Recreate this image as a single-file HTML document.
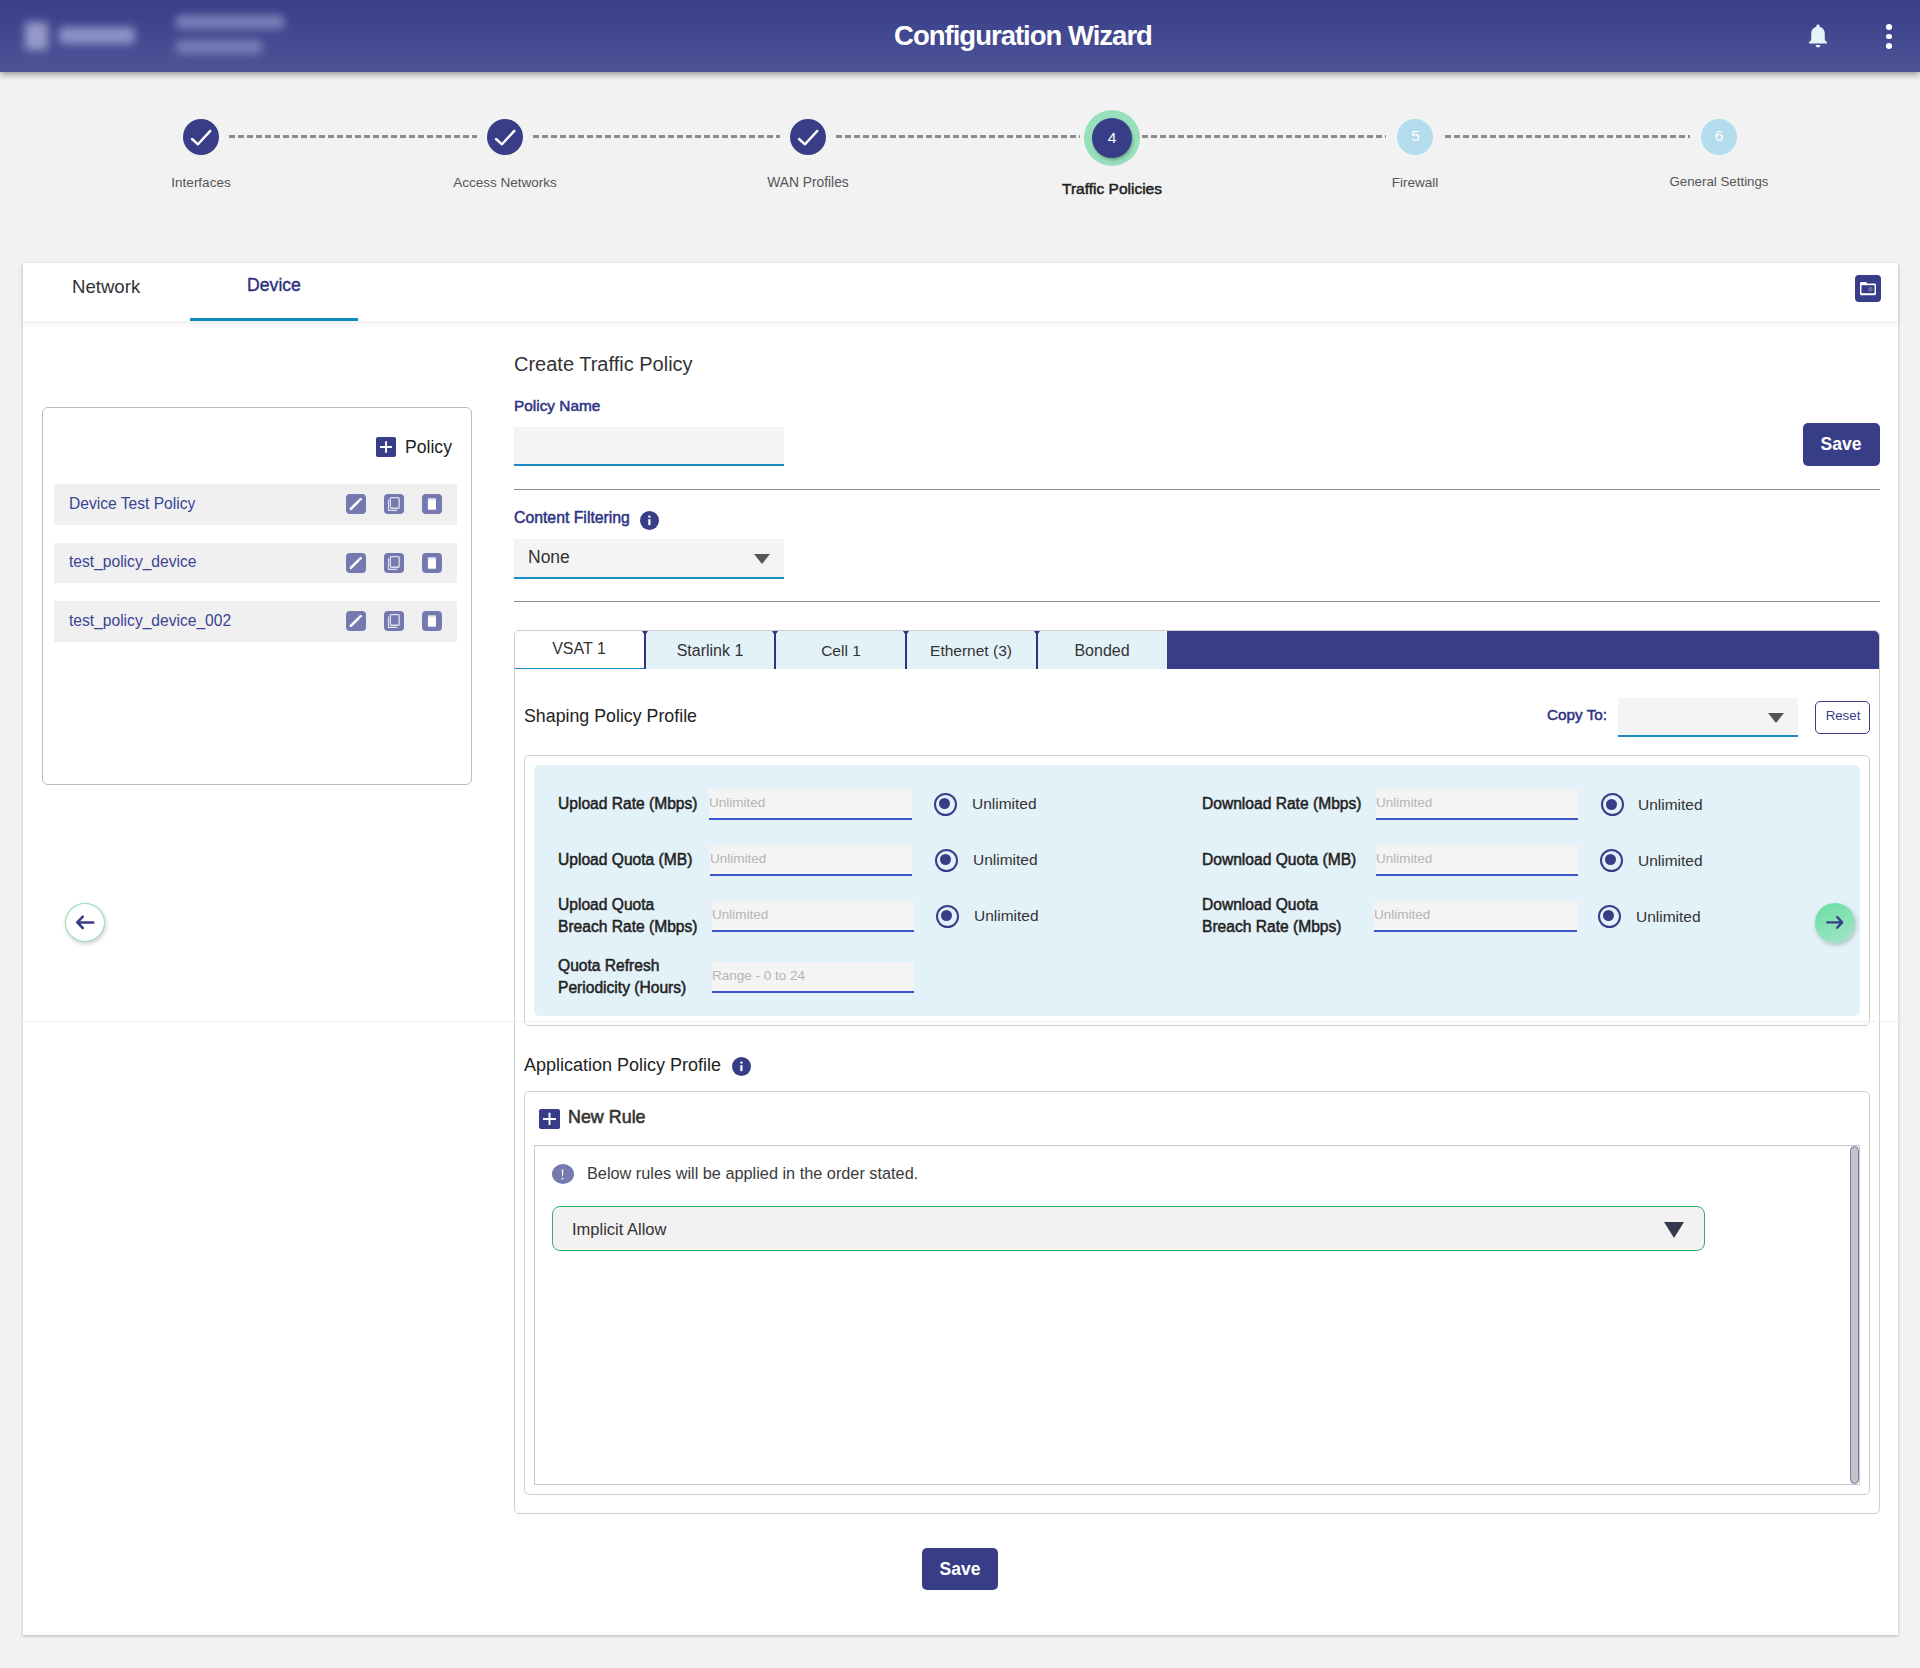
<!DOCTYPE html>
<html><head><meta charset="utf-8">
<style>
*{box-sizing:border-box;margin:0;padding:0}
html,body{width:1920px;height:1668px;overflow:hidden}
body{background:#f2f2f2;font-family:"Liberation Sans",sans-serif;position:relative;color:#333}
.a{position:absolute}
.t{position:absolute;white-space:nowrap;line-height:1}
.hdr{left:0;top:0;width:1920px;height:72px;background:linear-gradient(#383e88,#4e5497);box-shadow:0 3px 6px rgba(0,0,0,.35);z-index:2}
.blur{filter:blur(4px)}
.circ{border-radius:50%;width:36px;height:36px;background:#383d87}
.dash{height:3px;background:repeating-linear-gradient(90deg,#8c8c8c 0 6px,transparent 6px 9px)}
.slab{font-size:14px;color:#555;transform:translateX(-50%)}
.card{left:23px;top:263px;width:1875px;height:1372px;background:#fff;box-shadow:0 1px 3px rgba(0,0,0,.25)}
.row{left:54px;width:403px;height:41px;background:#f0f0f0}
.rtxt{left:69px;font-size:15.6px;color:#3b4394}
.ib{width:20px;height:20px;border-radius:4px;background:#7479b0}
.navy{background:#383d87}
.lbl{font-weight:400;color:#2e3384;-webkit-text-stroke:.5px #2e3384}
.inp{background:#f4f4f4;border-bottom:2px solid #1a8dc0}
.tab{top:631px;height:38px;background:#e3f1f8}
.tabt{font-size:16px;color:#333;transform:translateX(-50%)}
.sep{top:631px;width:2px;height:38px;background:#2f3382}
.sep:before{content:"";position:absolute;left:-2px;top:0;width:6px;height:3px;background:#2f3382;clip-path:polygon(0 0,100% 0,66% 100%,33% 100%)}
.fl{font-size:15.6px;font-weight:400;color:#222;-webkit-text-stroke:.5px #222}
.fin{background:#f4f4f4;border-bottom:2px solid #3b55cf}
.ph{font-size:13.5px;color:#b5b5b5}
.radio{width:23px;height:23px;border-radius:50%;border:2.2px solid #383d87;background:transparent}
.radio:after{content:"";position:absolute;left:3.8px;top:3.8px;width:11px;height:11px;border-radius:50%;background:#383d87}
.rl{font-size:15.5px;color:#333}
</style></head><body>

<!-- HEADER -->
<div class="a hdr">
  <div class="a blur" style="left:25px;top:22px;width:23px;height:28px;background:#a4a8d4;border-radius:3px;opacity:.85"></div>
  <div class="a blur" style="left:59px;top:27px;width:76px;height:17px;background:#959ad0;border-radius:5px;opacity:.9"></div>
  <div class="a blur" style="left:176px;top:15px;width:108px;height:14px;background:#7a7fb8;border-radius:4px"></div>
  <div class="a blur" style="left:176px;top:40px;width:86px;height:14px;background:#777cb6;border-radius:4px"></div>
  <div class="t" style="left:1023px;top:22px;transform:translateX(-50%);font-size:27.5px;letter-spacing:-1px;font-weight:700;color:#fff">Configuration Wizard</div>
  <svg class="a" style="left:1808px;top:24px" width="20" height="24" viewBox="0 0 20 24"><path d="M10 0.5c1 0 1.6.7 1.6 1.6v.6c3.3.8 5.2 3.6 5.2 7v6.3l2.2 2.3v1.2H1v-1.2l2.2-2.3V9.7c0-3.4 1.9-6.2 5.2-7v-.6C8.4 1.2 9 .5 10 .5zM7.6 21h4.8c0 1.4-1.1 2.5-2.4 2.5S7.6 22.4 7.6 21z" fill="#e6f2f8"/></svg>
  <div class="a" style="left:1886px;top:24px;width:5.5px;height:5.5px;border-radius:50%;background:#fff"></div>
  <div class="a" style="left:1886px;top:33.5px;width:5.5px;height:5.5px;border-radius:50%;background:#fff"></div>
  <div class="a" style="left:1886px;top:43px;width:5.5px;height:5.5px;border-radius:50%;background:#fff"></div>
</div>

<!-- STEPPER -->
<div class="a dash" style="left:229px;top:135px;width:248px"></div>
<div class="a dash" style="left:533px;top:135px;width:247px"></div>
<div class="a dash" style="left:836px;top:135px;width:244px"></div>
<div class="a dash" style="left:1142px;top:135px;width:244px"></div>
<div class="a dash" style="left:1445px;top:135px;width:245px"></div>

<div class="a circ" style="left:183px;top:119px"><svg width="36" height="36" viewBox="0 0 36 36"><path d="M9 20l6 5.3L27.3 11.9" fill="none" stroke="#fff" stroke-width="2.4" stroke-linecap="round" stroke-linejoin="round"/></svg></div>
<div class="a circ" style="left:487px;top:119px"><svg width="36" height="36" viewBox="0 0 36 36"><path d="M9 20l6 5.3L27.3 11.9" fill="none" stroke="#fff" stroke-width="2.4" stroke-linecap="round" stroke-linejoin="round"/></svg></div>
<div class="a circ" style="left:790px;top:119px"><svg width="36" height="36" viewBox="0 0 36 36"><path d="M9 20l6 5.3L27.3 11.9" fill="none" stroke="#fff" stroke-width="2.4" stroke-linecap="round" stroke-linejoin="round"/></svg></div>
<div class="a" style="left:1084px;top:110px;width:56px;height:56px;border-radius:50%;background:#98dfbc"></div>
<div class="a circ" style="left:1092px;top:118px;width:40px;height:40px;box-shadow:1px 2px 3px rgba(0,0,0,.25)"></div>
<div class="t" style="left:1112px;top:130px;transform:translateX(-50%);font-size:15.5px;color:#fff">4</div>
<div class="a circ" style="left:1397px;top:119px;background:#b3ddec"></div>
<div class="t" style="left:1415.5px;top:128px;transform:translateX(-50%);font-size:15.5px;color:#fff">5</div>
<div class="a circ" style="left:1701px;top:119px;background:#b3ddec"></div>
<div class="t" style="left:1719px;top:128px;transform:translateX(-50%);font-size:15.5px;color:#fff">6</div>

<div class="t slab" style="left:201px;top:176px;font-size:13.5px">Interfaces</div>
<div class="t slab" style="left:505px;top:176px;font-size:13.5px">Access Networks</div>
<div class="t slab" style="left:808px;top:176px;font-size:13.8px">WAN Profiles</div>
<div class="t slab" style="left:1112px;top:181px;font-size:15.5px;color:#222;-webkit-text-stroke:.5px #222">Traffic Policies</div>
<div class="t slab" style="left:1415px;top:176px;font-size:13.5px">Firewall</div>
<div class="t slab" style="left:1719px;top:175px;font-size:13.3px">General Settings</div>

<!-- CARD -->
<div class="a card"></div>
<div class="a" style="left:23px;top:263px;width:1875px;height:58px;background:#fff;box-shadow:0 3px 6px rgba(0,0,0,.07)"></div>
<div class="t" style="left:72px;top:278px;font-size:18.6px;color:#333">Network</div>
<div class="t" style="left:274px;top:277px;transform:translateX(-50%);font-size:17.6px;color:#2b2f7e;-webkit-text-stroke:.35px #2b2f7e">Device</div>
<div class="a" style="left:190px;top:318px;width:168px;height:3px;background:#0b8bbe"></div>
<div class="a navy" style="left:1855px;top:275px;width:26px;height:27px;border-radius:4px">
  <svg width="26" height="27" viewBox="0 0 26 27"><path d="M5 8.5c0-1 .6-1.5 1.5-1.5h4.3l1.5 1.6h7.2c.8 0 1.5.6 1.5 1.5v8.6c0 1-.7 1.5-1.5 1.5H6.5c-.9 0-1.5-.6-1.5-1.5z" fill="#fff"/><rect x="6.5" y="10.2" width="13" height="8" fill="#383d87"/><circle cx="15.5" cy="14.3" r="1.6" fill="none" stroke="#a3a6d0" stroke-width=".9"/></svg>
</div>

<!-- LEFT PANEL -->
<div class="a" style="left:42px;top:407px;width:430px;height:378px;border:1px solid #bdbdbd;border-radius:6px"></div>
<div class="a navy" style="left:376px;top:437px;width:20px;height:20px;border-radius:2px"><svg width="20" height="20"><path d="M10 4.2v11.5M4.1 10h11.8" stroke="#fff" stroke-width="1.9"/></svg></div>
<div class="t" style="left:405px;top:439px;font-size:17.6px;color:#222">Policy</div>

<div class="a row" style="top:484px"></div>
<div class="t rtxt" style="top:496px">Device Test Policy</div>
<div class="a row" style="top:543px;height:40px"></div>
<div class="t rtxt" style="top:554px">test_policy_device</div>
<div class="a row" style="top:601px"></div>
<div class="t rtxt" style="top:613px">test_policy_device_002</div>

<!-- row icons -->
<div class="a ib" style="left:346px;top:494px"><svg width="20" height="20" viewBox="0 0 20 20"><path d="M4.9 14.9L12.4 7.4" stroke="#fff" stroke-width="2.6" stroke-linecap="round"/><path d="M13.9 5.9l.8-.8" stroke="#fff" stroke-width="2.6" stroke-linecap="round" opacity=".9"/></svg></div><div class="a ib" style="left:384px;top:494px"><svg width="20" height="20" viewBox="0 0 20 20"><path d="M4.5 5.6v10.8h8.7" fill="none" stroke="#dfe0ef" stroke-width="1.1"/><rect x="6.35" y="3.55" width="8.8" height="10.7" rx="1" fill="none" stroke="#dfe0ef" stroke-width="1.3"/></svg></div><div class="a ib" style="left:422px;top:494px"><svg width="20" height="20" viewBox="0 0 20 20"><rect x="5.9" y="6" width="8.1" height="9.8" rx="1" fill="#fff"/><rect x="5.6" y="4.3" width="8.6" height="2" rx="1" fill="#e3e4f1"/></svg></div><div class="a ib" style="left:346px;top:553px"><svg width="20" height="20" viewBox="0 0 20 20"><path d="M4.9 14.9L12.4 7.4" stroke="#fff" stroke-width="2.6" stroke-linecap="round"/><path d="M13.9 5.9l.8-.8" stroke="#fff" stroke-width="2.6" stroke-linecap="round" opacity=".9"/></svg></div><div class="a ib" style="left:384px;top:553px"><svg width="20" height="20" viewBox="0 0 20 20"><path d="M4.5 5.6v10.8h8.7" fill="none" stroke="#dfe0ef" stroke-width="1.1"/><rect x="6.35" y="3.55" width="8.8" height="10.7" rx="1" fill="none" stroke="#dfe0ef" stroke-width="1.3"/></svg></div><div class="a ib" style="left:422px;top:553px"><svg width="20" height="20" viewBox="0 0 20 20"><rect x="5.9" y="6" width="8.1" height="9.8" rx="1" fill="#fff"/><rect x="5.6" y="4.3" width="8.6" height="2" rx="1" fill="#e3e4f1"/></svg></div><div class="a ib" style="left:346px;top:611px"><svg width="20" height="20" viewBox="0 0 20 20"><path d="M4.9 14.9L12.4 7.4" stroke="#fff" stroke-width="2.6" stroke-linecap="round"/><path d="M13.9 5.9l.8-.8" stroke="#fff" stroke-width="2.6" stroke-linecap="round" opacity=".9"/></svg></div><div class="a ib" style="left:384px;top:611px"><svg width="20" height="20" viewBox="0 0 20 20"><path d="M4.5 5.6v10.8h8.7" fill="none" stroke="#dfe0ef" stroke-width="1.1"/><rect x="6.35" y="3.55" width="8.8" height="10.7" rx="1" fill="none" stroke="#dfe0ef" stroke-width="1.3"/></svg></div><div class="a ib" style="left:422px;top:611px"><svg width="20" height="20" viewBox="0 0 20 20"><rect x="5.9" y="6" width="8.1" height="9.8" rx="1" fill="#fff"/><rect x="5.6" y="4.3" width="8.6" height="2" rx="1" fill="#e3e4f1"/></svg></div>

<div class="a" style="left:65px;top:903px;width:40px;height:39px;border-radius:50%;background:#fff;border:1px solid #92dcb8;box-shadow:1px 2px 4px rgba(0,0,0,.2)"><svg width="38" height="37" viewBox="0 0 38 37"><path d="M27.3 18.4H11.5M16.8 12.6L11.2 18.4l5.6 5.6" fill="none" stroke="#383d87" stroke-width="2.5" stroke-linecap="round" stroke-linejoin="round"/></svg></div>

<!-- FORM -->
<div class="t" style="left:514px;top:354px;font-size:20px;color:#333">Create Traffic Policy</div>
<div class="t lbl" style="left:514px;top:397.5px;font-size:15.4px">Policy Name</div>
<div class="a inp" style="left:514px;top:427px;width:270px;height:39px"></div>
<div class="a navy" style="left:1803px;top:423px;width:77px;height:43px;border-radius:5px"></div>
<div class="t" style="left:1841px;top:436px;transform:translateX(-50%);font-size:17.5px;font-weight:700;color:#fff">Save</div>
<div class="a" style="left:514px;top:489px;width:1366px;height:1px;background:#8c8c8c"></div>

<div class="t lbl" style="left:514px;top:510px;font-size:15.8px">Content Filtering</div>
<div class="a navy" style="left:640px;top:511px;width:19px;height:19px;border-radius:50%"><svg width="19" height="19"><circle cx="9.4" cy="5.6" r="1.2" fill="#fff"/><rect x="8.3" y="8.2" width="2.2" height="5.9" fill="#fff"/></svg></div>
<div class="a inp" style="left:514px;top:539px;width:270px;height:40px"></div>
<div class="t" style="left:528px;top:549px;font-size:17.5px;color:#333">None</div>
<svg class="a" style="left:754px;top:554px" width="16" height="10"><path d="M0 0h16L8 10z" fill="#555"/></svg>
<div class="a" style="left:514px;top:601px;width:1366px;height:1px;background:#8c8c8c"></div>

<!-- TAB CONTAINER -->
<div class="a" style="left:514px;top:630px;width:1366px;height:884px;border:1px solid #cfcfcf;border-radius:5px"></div>
<div class="a" style="left:515px;top:631px;width:130px;height:38px;background:#fff;border-radius:5px 0 0 0;border-bottom:1.2px solid #1a8dc0"></div>
<div class="t tabt" style="left:579px;top:641px">VSAT 1</div>
<div class="a tab" style="left:645px;width:130px"></div>
<div class="t tabt" style="left:710px;top:643px">Starlink 1</div>
<div class="a tab" style="left:775px;width:131px"></div>
<div class="t tabt" style="left:841px;top:643px;font-size:15.5px">Cell 1</div>
<div class="a tab" style="left:906px;width:131px"></div>
<div class="t tabt" style="left:971px;top:643px;font-size:15.5px">Ethernet (3)</div>
<div class="a tab" style="left:1037px;width:130px;border-radius:0 5px 0 0"></div>
<div class="t tabt" style="left:1102px;top:643px">Bonded</div>
<div class="a navy" style="left:1167px;top:631px;width:712px;height:38px;border-radius:0 5px 0 0"></div>
<div class="a sep" style="left:644px"></div>
<div class="a sep" style="left:774px"></div>
<div class="a sep" style="left:905px"></div>
<div class="a sep" style="left:1036px"></div>

<div class="t" style="left:524px;top:708px;font-size:17.8px;color:#222">Shaping Policy Profile</div>
<div class="t lbl" style="left:1547px;top:707px;font-size:15.3px">Copy To:</div>
<div class="a inp" style="left:1618px;top:698px;width:180px;height:39px"></div>
<svg class="a" style="left:1768px;top:713px" width="16" height="10"><path d="M0 0h16L8 10z" fill="#555"/></svg>
<div class="a" style="left:1815px;top:701px;width:55px;height:33px;border:1.2px solid #383d87;border-radius:5px"></div>
<div class="t" style="left:1843px;top:709px;transform:translateX(-50%);font-size:13.3px;color:#383d87">Reset</div>

<div class="a" style="left:524px;top:755px;width:1346px;height:271px;border:1px solid #cfcfcf;border-radius:5px"></div>
<div class="a" style="left:534px;top:765px;width:1326px;height:251px;background:#e3f1f8;border-radius:5px"></div>

<div class="t fl" style="left:558px;top:796px">Upload Rate (Mbps)</div><div class="a fin" style="left:709px;top:789px;width:203px;height:31px"></div><div class="t ph" style="left:709px;top:796px">Unlimited</div><div class="a radio" style="left:933.5px;top:792.5px"></div><div class="t rl" style="left:972px;top:795.5px">Unlimited</div><div class="t fl" style="left:558px;top:852px">Upload Quota (MB)</div><div class="a fin" style="left:710px;top:845px;width:202px;height:31px"></div><div class="t ph" style="left:710px;top:852px">Unlimited</div><div class="a radio" style="left:934.5px;top:848.5px"></div><div class="t rl" style="left:973px;top:851.5px">Unlimited</div><div class="t fl" style="left:558px;top:897px">Upload Quota</div><div class="t fl" style="left:558px;top:919px">Breach Rate (Mbps)</div><div class="a fin" style="left:712px;top:901px;width:202px;height:31px"></div><div class="t ph" style="left:712px;top:908px">Unlimited</div><div class="a radio" style="left:935.5px;top:904.5px"></div><div class="t rl" style="left:974px;top:907.5px">Unlimited</div><div class="t fl" style="left:558px;top:958px">Quota Refresh</div><div class="t fl" style="left:558px;top:980px">Periodicity (Hours)</div><div class="a fin" style="left:712px;top:962px;width:202px;height:31px"></div><div class="t ph" style="left:712px;top:969px">Range - 0 to 24</div><div class="t fl" style="left:1202px;top:796px">Download Rate (Mbps)</div><div class="a fin" style="left:1376px;top:789px;width:202px;height:31px"></div><div class="t ph" style="left:1376px;top:796px">Unlimited</div><div class="a radio" style="left:1600.5px;top:793.0px"></div><div class="t rl" style="left:1638px;top:797px">Unlimited</div><div class="t fl" style="left:1202px;top:852px">Download Quota (MB)</div><div class="a fin" style="left:1376px;top:845px;width:202px;height:31px"></div><div class="t ph" style="left:1376px;top:852px">Unlimited</div><div class="a radio" style="left:1599.5px;top:848.5px"></div><div class="t rl" style="left:1638px;top:853px">Unlimited</div><div class="t fl" style="left:1202px;top:897px">Download Quota</div><div class="t fl" style="left:1202px;top:919px">Breach Rate (Mbps)</div><div class="a fin" style="left:1374px;top:901px;width:203px;height:31px"></div><div class="t ph" style="left:1374px;top:908px">Unlimited</div><div class="a radio" style="left:1597.5px;top:904.5px"></div><div class="t rl" style="left:1636px;top:909px">Unlimited</div>

<div class="a" style="left:1815px;top:903px;width:39.5px;height:39.5px;border-radius:50%;background:linear-gradient(150deg,#68dea0,#a6e4cc);box-shadow:1px 2px 4px rgba(0,0,0,.22)"><svg width="40" height="40" viewBox="0 0 40 40"><path d="M12.3 19.4H26.8M22.2 14l5 5.4-5 5.4" fill="none" stroke="#383d87" stroke-width="2.3" stroke-linecap="round" stroke-linejoin="round"/></svg></div>

<!-- APP POLICY -->
<div class="t" style="left:524px;top:1056px;font-size:18px;color:#222">Application Policy Profile</div>
<div class="a navy" style="left:732px;top:1057px;width:19px;height:19px;border-radius:50%"><svg width="19" height="19"><circle cx="9.4" cy="5.6" r="1.2" fill="#fff"/><rect x="8.3" y="8.2" width="2.2" height="5.9" fill="#fff"/></svg></div>
<div class="a" style="left:524px;top:1091px;width:1346px;height:404px;border:1px solid #cfcfcf;border-radius:5px"></div>
<div class="a navy" style="left:539px;top:1109px;width:21px;height:20px;border-radius:2px"><svg width="21" height="20"><path d="M10.5 3.8v12.2M4 10h12.9" stroke="#fff" stroke-width="1.9"/></svg></div>
<div class="t" style="left:568px;top:1108.5px;font-size:17.9px;color:#333;-webkit-text-stroke:.55px #333">New Rule</div>
<div class="a" style="left:534px;top:1145px;width:1326px;height:340px;border:1px solid #c8c8c8"></div>
<div class="a" style="left:1850px;top:1146px;width:9px;height:338px;border-radius:5px;background:#c4c4c4;border:1px solid #7479b0"></div>
<div class="a" style="left:552px;top:1164px;width:22px;height:20px;border-radius:50%;background:#7479ae"><svg width="22" height="20"><path d="M9.8 5.6h1.5l-.35 6.7h-.8z" fill="#fff"/><circle cx="10.55" cy="14.6" r="0.95" fill="#fff"/></svg></div>
<div class="t" style="left:587px;top:1165px;font-size:16.3px;color:#3a3a3a">Below rules will be applied in the order stated.</div>
<div class="a" style="left:552px;top:1206px;width:1153px;height:45px;border:1.5px solid #2cb36a;border-radius:8px;background:#f2f2f2"></div>
<div class="t" style="left:572px;top:1221px;font-size:16.5px;color:#333">Implicit Allow</div>
<svg class="a" style="left:1664px;top:1222px" width="20" height="16"><path d="M0 0h20L10 16z" fill="#333a4d"/></svg>

<div class="a" style="left:20px;top:1021px;width:1880px;height:1px;background:#efefef;z-index:5"></div>
<div class="a navy" style="left:922px;top:1548px;width:76px;height:42px;border-radius:5px"></div>
<div class="t" style="left:960px;top:1561px;transform:translateX(-50%);font-size:17.5px;font-weight:700;color:#fff">Save</div>

</body></html>
